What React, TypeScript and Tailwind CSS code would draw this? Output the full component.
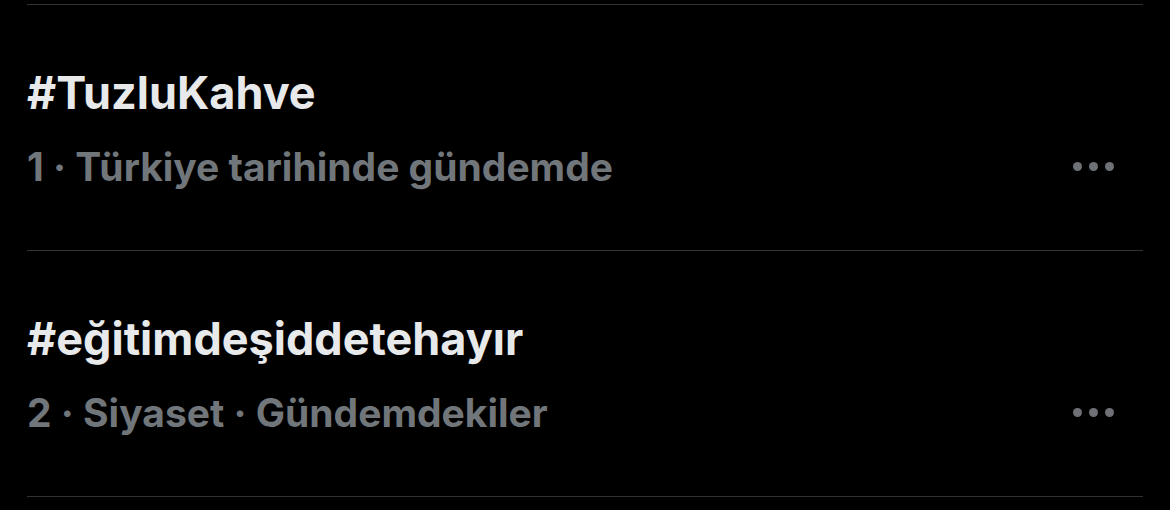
type Trend = {
  tag: string;
  meta: string;
};

const trends: Trend[] = [
  { tag: '#TuzluKahve', meta: '1 · Türkiye tarihinde gündemde' },
  { tag: '#eğitimdeşiddetehayır', meta: '2 · Siyaset · Gündemdekiler' },
];

function TrendRow({ trend }: { trend: Trend }) {
  return (
    <div className="flex h-[245px] items-center justify-between pt-px">
      <div className="flex flex-col gap-[26px]">
        <span className="text-[45px] font-bold leading-[52px] text-[#e7e9ea]">{trend.tag}</span>
        <span className="text-[39px] font-bold leading-[44px] text-[#71767b]">{trend.meta}</span>
      </div>
      {/* overflow menu */}
      <div className="mr-[29px] flex items-center gap-[7px] pt-[76px]">
        <span className="h-[9px] w-[9px] rounded-full bg-[#6e7276]" />
        <span className="h-[9px] w-[9px] rounded-full bg-[#6e7276]" />
        <span className="h-[9px] w-[9px] rounded-full bg-[#6e7276]" />
      </div>
    </div>
  );
}

export default function App() {
  return (
    <div
      className="h-[510px] w-[1170px] overflow-hidden bg-black px-[27px] pt-[4px]"
      style={{ fontFamily: 'Inter, "Noto Sans", sans-serif' }}
    >
      <div className="h-px bg-[#2f3336]" />
      {trends.map((t) => (
        <div key={t.tag}>
          <TrendRow trend={t} />
          <div className="h-px bg-[#2f3336]" />
        </div>
      ))}
    </div>
  );
}
